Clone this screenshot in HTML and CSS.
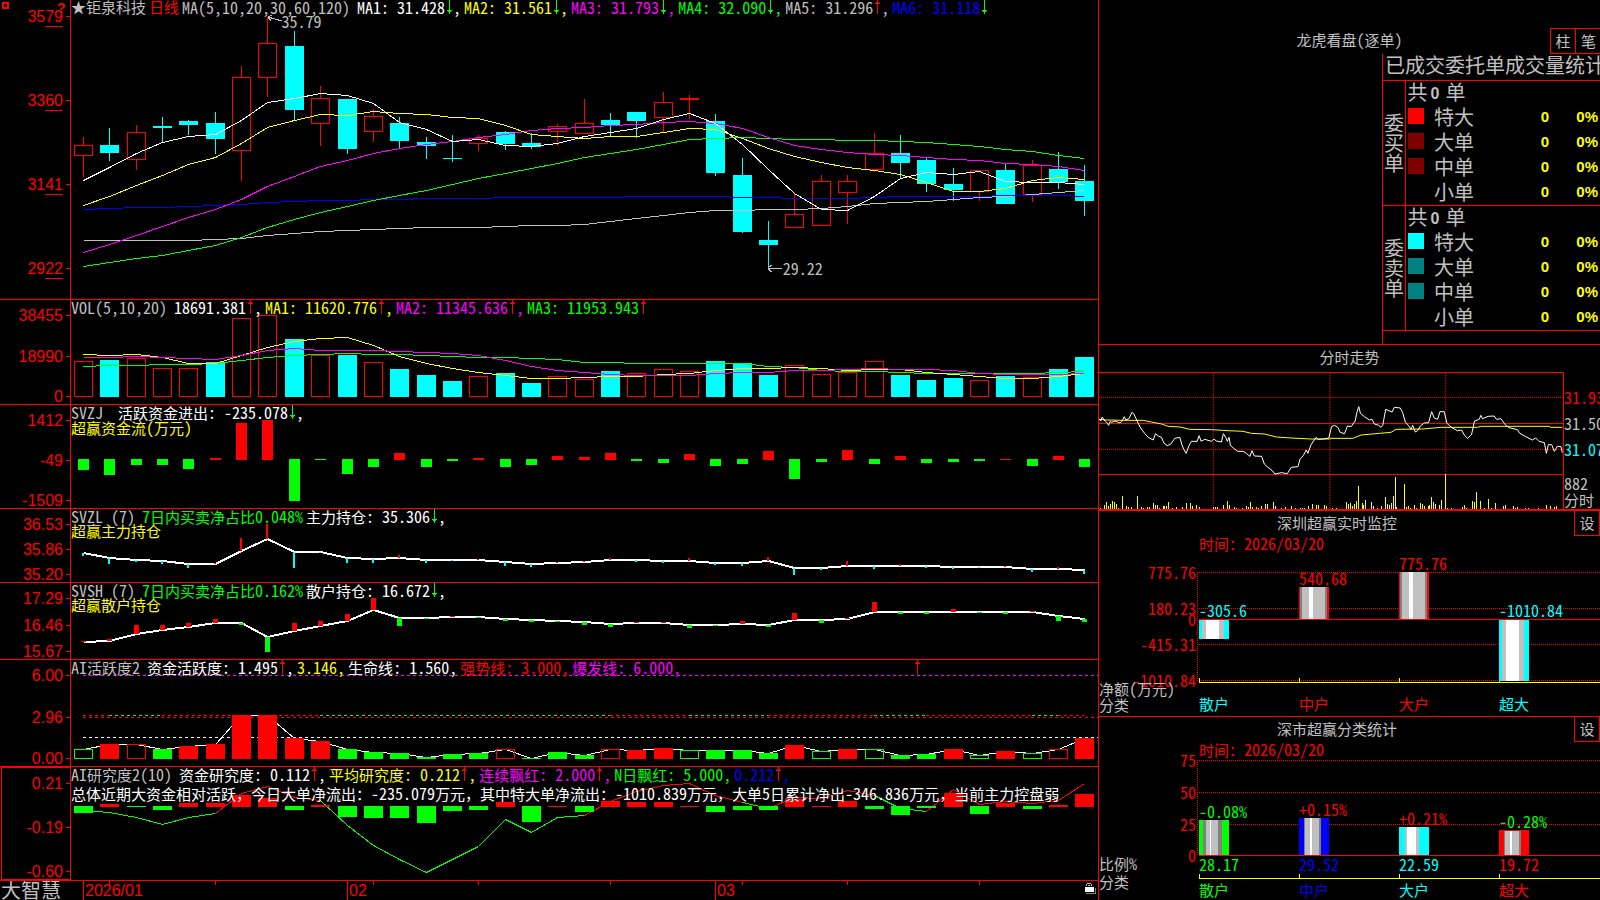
FILE: index.html
```html
<!DOCTYPE html>
<html lang="zh-cn">
<head>
	<meta charset="UTF-8" />
	<title>大智慧 - 钜泉科技</title>
	<link rel="stylesheet" href="styles.css">
</head>
<body>
	<svg class="symbols">
		<symbol id="down" viewBox="0 0 8 15"><path d="M4 0h1v10h2v1h-1v1h-1v2h-1v-2h-1v-1h-1v-1h2z" /></symbol>
		<symbol id="up" viewBox="0 0 8 15"><path d="M4 0h1v2h1v1h1v1h-2v10h-1v-10h-2v-1h1v-1h1z" /></symbol>
	</svg>
	<main class="terminal">
		<section class="charts">
			<div class="panel kline">
				<button class="pin" type="button" aria-label="菜单"></button>
				<button class="help" type="button">?</button>
				<div class="axis">
					<span>35<u>79</u></span><span>33<u>60</u></span><span>31<u>41</u></span><span>29<u>22</u></span>
				</div>
				<div class="plot">
					<svg id="kline" viewBox="0 0 1027 299" preserveAspectRatio="none"></svg>
					<p class="legend gray">
						<span>★钜泉科技</span><span class="red">日线</span><span class="n name">MA(5,10,20,30,60,120)</span>
						<span class="n white">MA1: 31.428<svg class="green"><use href="#down" /></svg>,</span>
						<span class="n yellow">MA2: 31.561<svg class="green"><use href="#down" /></svg>,</span>
						<span class="n magenta">MA3: 31.793<svg class="green"><use href="#down" /></svg>,</span>
						<span class="n green">MA4: 32.090<svg class="green"><use href="#down" /></svg>,</span>
						<span class="n gray">MA5: 31.296<svg class="red"><use href="#up" /></svg>,</span>
						<span class="n blue">MA6: 31.118<svg class="green"><use href="#down" /></svg></span>
					</p>
					<span class="mark high n">35.79</span>
					<span class="mark low n">29.22</span>
				</div>
			</div>
			<div class="panel">
				<div class="axis"><span>38455</span><span>18990</span><span>0</span></div>
				<div class="plot">
					<svg id="vol" viewBox="0 0 1027 104" preserveAspectRatio="none"></svg>
					<p class="legend">
						<span class="n gray name">VOL(5,10,20)</span>
						<span class="n white">18691.381<svg class="red"><use href="#up" /></svg>,</span>
						<span class="n yellow">MA1: 11620.776<svg class="red"><use href="#up" /></svg>,</span>
						<span class="n magenta">MA2: 11345.636<svg class="red"><use href="#up" /></svg>,</span>
						<span class="n green">MA3: 11953.943<svg class="red"><use href="#up" /></svg></span>
					</p>
				</div>
			</div>
			<div class="panel">
				<div class="axis"><span>1412</span><span>-49</span><span>-1509</span></div>
				<div class="plot">
					<svg id="svzj" viewBox="0 0 1027 103" preserveAspectRatio="none"></svg>
					<p class="legend">
						<span class="n gray name wide">SVZJ</span>
						<span class="white">活跃资金进出<span class="n">: -235.078<svg class="green"><use href="#down" /></svg>,</span></span>
					</p>
					<p class="legend yellow"><span>超赢资金流<span class="n">(</span>万元<span class="n">)</span></span></p>
				</div>
			</div>
			<div class="panel">
				<div class="axis"><span>36.53</span><span>35.86</span><span>35.20</span></div>
				<div class="plot">
					<svg id="svzl" viewBox="0 0 1027 73" preserveAspectRatio="none"></svg>
					<p class="legend">
						<span class="n gray name">SVZL (7)</span>
						<span class="green"><span class="n">7</span>日内买卖净占比<span class="n">0.048%</span></span>
						<span class="white">主力持仓<span class="n">: 35.306<svg class="green"><use href="#down" /></svg>,</span></span>
					</p>
					<p class="legend yellow"><span>超赢主力持仓</span></p>
				</div>
			</div>
			<div class="panel">
				<div class="axis"><span>17.29</span><span>16.46</span><span>15.67</span></div>
				<div class="plot">
					<svg id="svsh" viewBox="0 0 1027 76" preserveAspectRatio="none"></svg>
					<p class="legend">
						<span class="n gray name">SVSH (7)</span>
						<span class="green"><span class="n">7</span>日内买卖净占比<span class="n">0.162%</span></span>
						<span class="white">散户持仓<span class="n">: 16.672<svg class="green"><use href="#down" /></svg>,</span></span>
					</p>
					<p class="legend yellow"><span>超赢散户持仓</span></p>
				</div>
			</div>
			<div class="panel">
				<div class="axis"><span>6.00</span><span>2.96</span><span>0.00</span></div>
				<div class="plot">
					<svg id="active" viewBox="0 0 1027 106" preserveAspectRatio="none"></svg>
					<p class="legend">
						<span class="gray name"><span class="n">AI</span>活跃度<span class="n">2</span></span>
						<span class="white">资金活跃度<span class="n">: 1.495<svg class="red"><use href="#up" /></svg>,</span></span>
						<span class="n yellow">3.146,</span>
						<span class="white">生命线<span class="n">: 1.560,</span></span>
						<span class="red">强势线<span class="n">: 3.000,</span></span>
						<span class="magenta">爆发线<span class="n">: 6.000,</span></span>
					</p>
					<svg class="signal red"><use href="#up" /></svg>
				</div>
			</div>
			<div class="panel selected">
				<div class="axis"><span>0.21</span><span>-0.19</span><span>-0.60</span></div>
				<div class="plot">
					<svg id="study" viewBox="0 0 1027 113" preserveAspectRatio="none"></svg>
					<p class="legend">
						<span class="gray name"><span class="n">AI</span>研究度<span class="n">2(10)</span></span>
						<span class="white">资金研究度<span class="n">: 0.112<svg class="red"><use href="#up" /></svg>,</span></span>
						<span class="yellow">平均研究度<span class="n">: 0.212<svg class="red"><use href="#up" /></svg>,</span></span>
						<span class="magenta">连续飘红<span class="n">: 2.000<svg class="red"><use href="#up" /></svg>,</span></span>
						<span class="green"><span class="n">N</span>日飘红<span class="n">: 5.000,</span></span>
						<span class="n blue">0.212<svg class="red"><use href="#up" /></svg>,</span>
					</p>
					<p class="advice">总体近期大资金相对活跃，今日大单净流出：<span class="n">-235.079</span>万元，其中特大单净流出：<span class="n">-1010.839</span>万元，大单<span class="n">5</span>日累计净出<span class="n">-346.836</span>万元，当前主力控盘弱</p>
				</div>
			</div>
			<footer class="timeline">
				<strong>大智慧</strong>
				<div class="dates">
					<svg id="ticks" viewBox="0 0 1027 19" preserveAspectRatio="none"></svg>
					<span>2026/01</span><span>02</span><span>03</span>
					<svg class="lock" viewBox="0 0 11 12"><path d="M2 1h4v1h1v2h-1v-2h-4v2h-1v-2h1zM3 3h2v1h-2z" fill="#c0c0c0" /><path d="M10 6h1v6H1v-1h9z" fill="#808080" /><path d="M0 5h9v5H0z" fill="#fff" /></svg>
				</div>
			</footer>
		</section>

		<aside class="side">
			<section class="orders">
				<header>
					<h2>龙虎看盘<span class="n">(</span>逐单<span class="n">)</span></h2>
					<div class="tools"><button type="button">柱</button><button type="button">笔</button></div>
				</header>
				<div class="stat">
					<table>
						<caption>已成交委托单成交量统计</caption>
						<colgroup><col class="groupCol"><col class="boxCol"><col class="nameCol"><col><col class="pctCol"></colgroup>
						<tbody>
							<tr><th class="group" rowspan="5"><span>委买单</span></th><td class="total" colspan="4">共<b>0</b>单</td></tr>
							<tr><td><i class="box buy1"></i></td><th>特大</th><td class="num">0</td><td class="num">0%</td></tr>
							<tr><td><i class="box buy2"></i></td><th>大单</th><td class="num">0</td><td class="num">0%</td></tr>
							<tr><td><i class="box buy2"></i></td><th>中单</th><td class="num">0</td><td class="num">0%</td></tr>
							<tr><td></td><th>小单</th><td class="num">0</td><td class="num">0%</td></tr>
						</tbody>
						<tbody>
							<tr><th class="group" rowspan="5"><span>委卖单</span></th><td class="total" colspan="4">共<b>0</b>单</td></tr>
							<tr><td><i class="box sell1"></i></td><th>特大</th><td class="num">0</td><td class="num">0%</td></tr>
							<tr><td><i class="box sell2"></i></td><th>大单</th><td class="num">0</td><td class="num">0%</td></tr>
							<tr><td><i class="box sell2"></i></td><th>中单</th><td class="num">0</td><td class="num">0%</td></tr>
							<tr><td></td><th>小单</th><td class="num">0</td><td class="num">0%</td></tr>
						</tbody>
					</table>
				</div>
			</section>

			<section class="trend">
				<h2>分时走势</h2>
				<div class="trendBody">
					<svg id="trend" viewBox="27 99 1395 408" preserveAspectRatio="none"></svg>
					<div class="prices">
						<span class="n red">31.93</span><span class="n gray">31.50</span><span class="n cyan">31.07</span>
						<span class="n gray vol">882</span><span class="gray">分时</span>
					</div>
				</div>
			</section>

			<section class="stats monitor">
				<header>
					<h2>深圳超赢实时监控</h2>
					<div class="tools"><button type="button">设</button></div>
				</header>
				<p class="time">时间：<span class="n">2026/03/20</span></p>
				<div class="barChart">
					<div class="scale n"><span>775.76</span><span>180.23</span><span>0</span><span>-415.31</span><span>-1010.84</span></div>
					<div class="bars">
						<svg class="grid" viewBox="0 0 403 111" preserveAspectRatio="none">
							<path class="dot" d="M0 .5H403M0 36.5H403M0 72.5H403M0 108.5H403M.5 0V108" />
							<path d="M2 47.5H403" />
							<path class="base" d="M2 110.5H403M2.5 106V110M102.5 106V110M202.5 106V110M302.5 106V110" />
						</svg>
						<div class="col"><div class="above"><span class="n cyan">-305.6</span></div><i class="bar flat" style="height:19px"></i></div>
						<div class="col"><div class="above"><span class="n red">540.68</span><i class="bar rise" style="height:32px"></i></div></div>
						<div class="col"><div class="above"><span class="n red">775.76</span><i class="bar rise" style="height:47px"></i></div></div>
						<div class="col"><div class="above"><span class="n cyan">-1010.84</span></div><i class="bar flat" style="height:61px"></i></div>
					</div>
				</div>
				<div class="corner"><span>净额<span class="n">(</span>万元<span class="n">)</span></span><span>分类</span></div>
				<div class="cats"><span class="cyan">散户</span><span class="red">中户</span><span class="red">大户</span><span class="cyan">超大</span></div>
			</section>

			<section class="stats classify">
				<header>
					<h2>深市超赢分类统计</h2>
					<div class="tools"><button type="button">设</button></div>
				</header>
				<p class="time">时间：<span class="n">2026/03/20</span></p>
				<div class="barChart">
					<div class="scale n"><span>75</span><span>50</span><span>25</span><span>0</span></div>
					<div class="bars">
						<svg class="grid" viewBox="0 0 403 119" preserveAspectRatio="none">
							<path class="dot" d="M0 .5H403M0 32.5H403M0 64.5H403M.5 0V95" />
							<path d="M2 95.5H403" />
							<path class="base" d="M2 118.5H403M2.5 114V118M102.5 114V118M202.5 114V118M302.5 114V118" />
						</svg>
						<div class="col"><div class="above"><span class="n green">-0.08%</span><i class="bar c1" style="height:35px"></i></div><span class="n green">28.17</span></div>
						<div class="col"><div class="above"><span class="n red">+0.15%</span><i class="bar c2" style="height:37px"></i></div><span class="n blue">29.52</span></div>
						<div class="col"><div class="above"><span class="n red">+0.21%</span><i class="bar c3" style="height:28px"></i></div><span class="n cyan">22.59</span></div>
						<div class="col"><div class="above"><span class="n green">-0.28%</span><i class="bar c4" style="height:25px"></i></div><span class="n red">19.72</span></div>
					</div>
				</div>
				<div class="corner"><span>比例<span class="n">%</span></span><span>分类</span></div>
				<div class="cats"><span class="green">散户</span><span class="blue">中户</span><span class="cyan">大户</span><span class="red">超大</span></div>
			</section>
		</aside>
	</main>
	<script type="text/javascript" src="script.js"></script>
</body>
</html>
```
FILE: styles.css
```css
*{
	margin: 0;padding: 0;
	box-sizing: border-box;
}
body{
	background: #000;
	color: #c0c0c0;
	font: 15px/16px "Noto Sans CJK SC", sans-serif;
	overflow-x: hidden;
}
button{
	background: #000;
	color: inherit;
	font: inherit;
	border: 0;
	cursor: pointer;
}
h2{
	font-size: 15px;
	font-weight: normal;
}
.symbols{
	display: none;
}
/* 半角数字，每个字符8px */
.n{
	font-size: 16px;
	font-feature-settings: "hwid";
	white-space: pre;
}
.white{color: #fff;fill: #fff;}
.gray{color: #c0c0c0;}
.yellow{color: #ff0;}
.magenta{color: #f0f;}
.green{color: #0f0;fill: #0f0;}
.blue{color: #00f;}
.cyan{color: #0ff;}
.red{color: #f00;fill: #f00;}

.terminal{
	display: grid;
	grid-template-columns: minmax(0, 1fr) 502px;
	min-height: 100vh;
}

/* 左侧指标区 */
.charts{
	display: grid;
	grid-template-rows: 300fr 105fr 104fr 74fr 77fr 107fr 114fr 19px;
}
.panel{
	position: relative;
	display: grid;
	grid-template-columns: 71px minmax(0, 1fr);
	border-bottom: 1px solid #f00;
}
.axis{
	display: flex;
	flex-direction: column;
	justify-content: space-between;
	padding: 10px 0 1px;
	border-right: 1px solid #f00;
	color: #f00;
	font: 16px/12px "Liberation Sans", sans-serif;
	text-align: right;
}
.axis span::after{
	content: "";
	display: inline-block;
	width: 4px;height: 1px;
	margin-left: 3px;
	background: #f00;
	vertical-align: 5px;
}
.axis u{
	display: inline-block;
	height: 16px;
	margin-bottom: -4px;
	text-decoration: none;
	border-bottom: 1px solid #f00;
}
.kline .axis{
	padding: 11px 0 24px;
}
.selected .axis{
	border: 1px solid #f00;
	margin-left: 1px;
}
.pin,.help{
	position: absolute;
	top: 2px;left: 2px;
}
.pin{
	width: 7px;height: 7px;
	border: 2px solid #f00;
}
.help{
	left: 57px;
	color: #f00;
	background: none;
	font: bold 14px/12px "Liberation Sans", sans-serif;
}
.plot{
	position: relative;
}
.plot > svg,.dates > svg,.grid{
	position: absolute;
	top: 0;left: 0;
	width: 100%;height: 100%;
	shape-rendering: crispEdges;
}
.legend{
	position: relative;
	display: flex;
	gap: 3px;
	height: 15px;
	line-height: 14px;
	white-space: nowrap;
}
.legend svg{
	width: 8px;height: 15px;
	vertical-align: top;
	shape-rendering: crispEdges;
}
.name{
	margin-right: 4px;
}
.wide{
	margin-right: 12px;
}
.advice{
	position: relative;
	color: #fff;
	line-height: 22px;
	white-space: nowrap;
}
.mark{
	position: absolute;
}
.high{
	top: 13px;left: 20.5%;
}
.low{
	bottom: 23px;left: 69.3%;
}
.plot > .signal{
	left: 82%;
	width: 8px;height: 15px;
}
.timeline{
	display: grid;
	grid-template-columns: 71px minmax(0, 1fr);
}
.timeline strong{
	padding-left: 1px;
	font-size: 20px;
	font-weight: normal;
	line-height: 17px;
}
.dates{
	position: relative;
	display: grid;
	grid-template-columns: 264fr 368fr 383fr;
	padding-left: 12px;
	color: #f00;
	font: 16px/19px "Liberation Sans", sans-serif;
}
.dates span{
	padding-left: 1px;
	border-left: 1px solid #f00;
}
.dates > .lock{
	left: auto;right: 2px;top: 1px;
	width: 11px;height: 12px;
}

/* 右侧 */
.side{
	display: flex;
	flex-direction: column;
	border-left: 1px solid #f00;
}
.side h2{
	text-align: center;
}
.side header{
	position: relative;
	line-height: 23px;
	height: 25px;
}
.tools{
	position: absolute;
	top: 0;right: 0;
	display: flex;
}
.tools button{
	width: 26px;height: 25px;
	padding-bottom: 2px;
	border: 1px solid #f00;
	border-top: 0;
	line-height: 21px;
}
.orders{
	padding-top: 28px;
	border-bottom: 1px solid #f00;
}
.orders .tools{
	right: -2px;
	border-top: 1px solid #f00;
}
.orders .tools button + button{
	border-left: 0;
}
.stat{
	margin: 1px 0 0 283px;
	padding-bottom: 13px;
	border-left: 1px solid #f00;
	overflow: hidden;
}
.stat table{
	width: 100%;
	border-collapse: collapse;
	table-layout: fixed;
	font-size: 20px;
	line-height: 21px;
}
.stat caption{
	padding-left: 2px;
	height: 26px;
	line-height: 22px;
	text-align: left;
	white-space: nowrap;
}
.stat tbody{
	border-top: 1px solid #f00;
	border-bottom: 1px solid #f00;
}
.stat tr{
	height: 25px;
}
.stat td,.stat th{
	vertical-align: top;
}
.groupCol{width: 22px;}
.boxCol{width: 27px;}
.nameCol{width: 44px;}
.pctCol{width: 56px;}
.stat th{
	font-weight: normal;
}
.stat .group{
	border-right: 1px solid #f00;
	line-height: 20px;
	vertical-align: middle;
}
.group span{
	display: block;
	width: 20px;
	margin: -1px 0 0 1px;
}
.total{
	padding-left: 2px;
}
.total b{
	padding: 0 6px 0 3px;
	font: bold 16px "Liberation Sans", sans-serif;
	vertical-align: 1px;
}
.box{
	display: block;
	width: 16px;height: 16px;
	margin: 2px 0 0 2px;
}
.buy1{background: #f00;}
.buy2{background: #800000;}
.sell1{background: #0ff;}
.sell2{background: #008080;}
.num{
	color: #ff0;
	font: bold 15px/21px "Liberation Sans", sans-serif;
	text-align: right;
}
.num:last-child{
	padding-right: 7px;
}

.trend{
	border-bottom: 2px solid #f00;
}
.trend h2{
	height: 27px;
	line-height: 23px;
}
.trendBody{
	display: grid;
	grid-template-columns: minmax(0, 1fr) 36px;
}
#trend{
	width: 100%;height: 137px;
	border-top: 1px solid #f00;
	border-right: 1px solid #f00;
	shape-rendering: crispEdges;
}
.prices{
	display: flex;
	flex-direction: column;
	gap: 10px;
	padding: 17px 0 0;
	overflow: hidden;
	white-space: nowrap;
}
.prices .vol{
	margin: 8px 0 -9px;
}

.stats{
	display: grid;
	grid-template-columns: 98px minmax(0, 1fr);
}
.stats header,.barChart{
	grid-column: 1 / 3;
}
.stats h2{
	margin-right: 25px;
}
.monitor{
	border-bottom: 1px solid #f00;
}
.time{
	grid-column: 2;
	height: 36px;
	padding-left: 2px;
	color: #f00;
	line-height: 14px;
}
.classify .time{
	height: 18px;
}
.barChart{
	display: grid;
	grid-template-columns: 98px minmax(0, 1fr);
}
.scale{
	display: grid;
	grid-template-rows: 36px 11px 25px 36px;
	height: 111px;
	margin-top: -8px;
	margin-bottom: 8px;
	color: #f00;
	text-align: right;
	padding-right: 1px;
}
.classify .scale{
	grid-template-rows: 32px 32px 31px;
	height: 119px;
}
.scale span{
	height: 16px;
}
.bars{
	position: relative;
	display: grid;
	grid-template-columns: repeat(4, 1fr);
	padding: 0 1px 0 2px;
}
.col{
	position: relative;
}
.above{
	display: flex;
	flex-direction: column;
	justify-content: flex-end;
	height: 47px;
	margin-bottom: 1px;
	line-height: 18px;
}
.classify .above{
	height: 95px;
}
.bar{
	display: block;
	flex: none;
	width: 30px;
}
.flat{
	background: linear-gradient(90deg, #0ff 3px, #c0c0c0 3px 7px, #fff 7px 20px, #c0c0c0 20px 25px, #0ff 25px);
}
.rise{
	background: linear-gradient(90deg, #f00 1px, #808080 1px 3px, #c0c0c0 3px 10px, #fff 10px 14px, #c0c0c0 14px 26px, #808080 26px 28px, #f00 28px);
}
.c1{
	background: linear-gradient(90deg, #0f0 4px, #808080 4px 7px, #c0c0c0 7px 11px, #fff 11px 12px, #c0c0c0 12px 19px, #808080 19px 23px, #0f0 23px);
}
.c2{
	background: linear-gradient(90deg, #00f 5px, #808080 5px 6px, #c0c0c0 6px 11px, #fff 11px 13px, #c0c0c0 13px 20px, #808080 20px 22px, #00f 22px);
}
.c3{
	background: linear-gradient(90deg, #0ff 6px, #c0c0c0 6px 8px, #fff 8px 17px, #c0c0c0 17px 20px, #0ff 20px);
}
.c4{
	background: linear-gradient(90deg, #f00 5px, #808080 5px 6px, #c0c0c0 6px 11px, #fff 11px 13px, #c0c0c0 13px 20px, #808080 20px 22px, #f00 22px);
	border-top: 1px solid #f00;
}
.grid path{
	fill: none;
	stroke: #f00;
}
.grid .dot{
	stroke-dasharray: 1 1;
}
.grid .base{
	stroke: #ff0;
}
.corner{
	position: relative;
	display: flex;
	flex-direction: column;
	margin-top: -3px;
	height: 36px;
	white-space: nowrap;
}
.cats{
	display: grid;
	grid-template-columns: repeat(4, 1fr);
	padding: 13px 1px 0 2px;
}
.classify .corner{
	gap: 2px;
	margin-top: -24px;
	height: 43px;
}
.classify .cats{
	padding-top: 3px;
}
```
FILE: script.js
```js
var NS = 'http://www.w3.org/2000/svg',
	RED = '#f00', GREEN = '#0f0', CYAN = '#0ff', WHITE = '#fff', YELLOW = '#ff0', MAGENTA = '#f0f', GRAY = '#c0c0c0', BLUE = '#00f';

//第i根K线的中心位置
function cx(i){
	return 12 + Math.round(26.35 * i);
}

function add(svg, tag, attrs){
	var el = document.createElementNS(NS, tag);
	for(var k in attrs){
		el.setAttribute(k, attrs[k]);
	}
	svg.appendChild(el);
}

function fill(svg, x, y, w, h, color){
	add(svg, 'rect', {x: x, y: y, width: w, height: Math.max(h, 1), fill: color});
}

function hollow(svg, x, y, w, h, color){
	add(svg, 'rect', {x: x + .5, y: y + .5, width: w - 1, height: Math.max(h - 1, 1), fill: 'none', stroke: color});
}

function line(svg, ys, color, width, from){
	var off = width == 2 ? 0 : .5;
	var pts = ys.map(function(y, i){
		return (cx(i + (from || 0)) + .5) + ',' + (y + off);
	});
	add(svg, 'polyline', {points: pts.join(' '), fill: 'none', stroke: color, 'stroke-width': width || 1});
}

function dash(svg, x1, x2, y, color){
	add(svg, 'path', {d: 'M' + x1 + ' ' + (y + .5) + 'H' + x2, stroke: color, 'stroke-dasharray': '3 3'});
}

//K线：颜色, 最高, 实体上, 实体下, 最低
var candles = [
	['r',137,145,156,177],['c',128,145,153,161],['r',125,132,160,170],['c',117,126,128,142],['c',120,121,125,135],
	['c',112,123,139,154],['r',66,77,151,181],['r',17,43,78,97],['c',31,46,110,121],['r',86,98,124,146],
	['c',99,99,149,154],['r',109,116,132,142],['c',117,123,141,148],['c',137,142,146,159],['c',135,158,159,162],
	['r',135,138,144,151],['c',131,132,144,150],['c',133,143,147,149],['r',124,126,132,146],['r',99,123,134,134],
	['c',113,120,125,136],['c',112,112,121,138],['r',92,102,118,132],['r',95,98,100,119],['c',114,121,173,176],
	['c',158,175,232,233],['c',221,240,245,268],['r',193,214,228,228],['r',175,181,226,226],['r',175,181,193,224],
	['r',133,153,170,172],['c',135,153,163,178],['c',158,160,184,192],['c',168,184,190,201],['r',170,170,192,201],
	['c',163,170,204,204],['r',160,165,195,202],['c',152,169,182,189],['c',165,181,201,216]
];
var kline = document.getElementById('kline');
candles.forEach(function(d, i){
	var x = cx(i);
	if(d[0] == 'c'){
		fill(kline, x, d[1], 1, d[4] - d[1], CYAN);
		fill(kline, x - 9, d[2], 19, d[3] - d[2], CYAN);
	}else{
		fill(kline, x, d[1], 1, d[2] - d[1], RED);
		if(d[4] > d[3]){
			fill(kline, x, d[3], 1, d[4] - d[3], RED);
		}
		hollow(kline, x - 9, d[2], 19, d[3] - d[2], RED);
	}
});
line(kline, [240,240,240,240,240,239,238,235,233,231,230,229,228,227,227,227,226,225,225,224,221,218,215,212,210,210,209,209,208,206,203,202,201,199,197,196,194,192,190], GRAY);
line(kline, [209,208,207,207,206,205,204,202,201,200,200,199,199,198,198,198,197,197,197,197,197,196,196,196,196,197,197,198,198,198,197,196,196,196,196,195,195,195,196], BLUE);
line(kline, [266,262,258,255,250,245,237,227,219,212,206,200,195,190,184,178,173,168,163,157,153,149,144,139,138,137,138,139,139,140,140,141,142,144,146,149,151,155,158], GREEN);
line(kline, [252,244,235,226,217,209,199,186,176,166,160,153,148,144,141,137,134,130,128,127,125,124,122,121,123,128,137,145,149,152,154,155,157,159,160,163,164,166,170], MAGENTA);
line(kline, [205,196,185,175,164,157,143,127,120,114,115,111,113,114,117,118,125,134,136,138,136,136,132,128,129,138,148,156,162,167,170,174,182,191,191,188,180,177,179], YELLOW);
line(kline, [180,167,153,142,136,134,120,102,98,93,95,103,122,129,141,139,145,146,143,136,132,128,119,113,123,144,169,193,209,210,196,178,172,174,171,181,182,182,184], WHITE);
add(kline, 'path', {d: 'M197 17l14 4M197 17l4 -2M197 17l3 4M697 268.5h14M697 268l4 -3M697 269l4 3', stroke: GRAY, fill: 'none'});

//成交量
var vol = document.getElementById('vol'),
	volTop = [61,60,58,68,68,62,18,15,39,55,55,62,69,75,81,76,73,83,76,79,71,73,69,71,61,63,75,65,74,72,61,75,80,78,80,76,77,69,57],
	volType = 'rcrrrcrrcrcrcccrccrrcrrrcccrrrrcccrcrcc';
volTop.forEach(function(y, i){
	(volType.charAt(i) == 'r' ? hollow : fill)(vol, cx(i) - 9, y, 19, 97 - y, volType.charAt(i) == 'r' ? RED : CYAN);
});
line(vol, [66,65,65,64,64,63,60,57,55,54,53,54,54,55,56,57,57,58,59,62,62,63,63,63,63,63,66,67,70,71,71,72,73,73,73,73,73,72,71], GREEN);
line(vol, [54,55,54,57,63,63,55,47,41,38,37,45,56,63,68,72,75,78,78,77,76,76,74,73,70,68,68,67,68,70,69,69,72,74,76,78,78,76,73], YELLOW);
line(vol, [57,57,56,57,58,59,55,50,48,50,50,50,51,52,53,55,60,66,70,72,74,75,75,75,73,72,72,70,70,69,68,69,69,70,73,74,74,74,73], MAGENTA);

//红绿柱，正数向上，负数向下
function bars(svg, zero, width, data){
	data.forEach(function(v, i){
		var x = cx(i) - (width - 1) / 2;
		v > 0 ? fill(svg, x, zero + 1 - v, width, v, RED) : fill(svg, x, zero, width, -v, GREEN);
	});
}
bars(document.getElementById('svzj'), 54, 11, [-11,-16,-6,-6,-10,2,37,40,-42,-1,-15,-8,7,-8,-2,2,-8,-6,4,3,7,-2,-4,6,-7,-5,9,-20,-3,10,-5,4,-4,-3,-2,1,-7,4,-8]);

//持仓线和上下短柱
function hold(id, ys, ends, width, downColor){
	var svg = document.getElementById(id);
	line(svg, ys, WHITE, 2);
	ends.forEach(function(e, i){
		fill(svg, cx(i) - Math.floor(width / 2), Math.min(e, ys[i]), width, Math.abs(e - ys[i]), e < ys[i] ? RED : downColor);
	});
}
hold('svzl',
	[44,49,51,52,55,55,42,30,43,43,49,50,49,51,51,51,53,55,54,53,51,51,52,52,54,54,52,59,59,57,57,57,57,58,58,58,60,60,61],
	[47,55,53,55,59,54,29,15,59,44,54,54,46,54,52,50,57,58,53,52,49,53,54,49,56,57,48,66,61,52,60,55,59,60,59,57,63,58,65], 2, CYAN);
hold('svsh',
	[59,58,51,47,44,40,40,54,48,43,38,27,35,35,34,34,36,37,38,39,41,40,40,42,42,41,42,37,37,36,29,29,29,29,29,29,29,33,36],
	[58,56,42,42,40,36,42,69,40,38,31,15,43,36,33,35,38,39,39,42,44,39,39,45,43,38,44,30,40,35,19,31,31,26,30,31,28,38,39], 5, GREEN);

//活跃度：大写实心，小写空心
var active = document.getElementById('active'),
	actTop = [89,84,84,89,86,84,55,55,78,81,89,92,93,97,94,93,89,98,92,95,89,90,88,90,90,90,93,85,91,89,89,95,94,89,95,91,93,89,78],
	actType = 'gRrGRRRRRRGGGGGGrGGGrRRgGGGRgRgGGRgRgrR';
dash(active, 12, 1027, 15, MAGENTA);
dash(active, 12, 1027, 57, RED);
dash(active, 12, 1027, 77, WHITE);
[[0,1,RED],[1,3,GREEN],[3,6,RED],[6,7,WHITE],[7,9,RED],[9,20,GREEN],[20,23,RED],[23,26,GREEN],[26,30,RED],[30,32,GREEN],[32,36,RED],[36,37,GREEN],[37,38,RED]].forEach(function(s){
	dash(active, cx(s[0]), cx(s[1]), 55, s[2]);
});
line(active, actTop, WHITE);
actTop.forEach(function(y, i){
	var t = actType.charAt(i);
	(t == t.toLowerCase() ? hollow : fill)(active, cx(i) - 9, y, 19, 99 - y, t.toLowerCase() == 'r' ? RED : GREEN);
});

//研究度
var study = document.getElementById('study'),
	avg = [43,45,50,57,50,46,26,19,30,33,58,78,92,105,92,79,52,65,50,48,34,24,18,16,28,35,41,30,31,23,28,41,44,22,37,34,36,33,16];
[[0,5,GREEN],[5,9,RED],[9,19,GREEN],[19,25,RED],[25,26,GREEN],[26,30,RED],[30,32,GREEN],[32,38,RED]].forEach(function(s){
	line(study, avg.slice(s[0], s[1] + 1), s[2], 1, s[0]);
});
bars(study, 39, 19, [-7,3,-1,-4,4,4,12,9,-4,2,-11,-12,-12,-17,-5,-4,5,-16,1,-6,6,5,5,1,-6,-4,-4,8,1,6,-3,-9,-2,14,-8,4,-3,2,13]);

//时间轴短刻度
[1,5,11,15,20,25,29,34].forEach(function(i){
	fill(document.getElementById('ticks'), cx(i), 0, 1, 4, RED);
});

//分时走势
var trend = document.getElementById('trend'),
	price = '27,236 32,243 37,231 42,240 50,247 56,256 60,245 66,247 75,243 90,249 97,243 103,230 108,240 117,236 126,217 132,222 138,235 146,252 152,264 165,281 175,292 190,300 197,281 205,288 215,292 222,309 232,317 243,312 255,295 270,292 276,314 282,328 289,340 298,316 305,304 322,304 328,287 334,304 345,298 365,304 372,297 380,303 395,306 401,281 408,292 413,304 418,292 422,316 432,325 444,334 460,334 470,340 481,349 487,332 494,348 516,349 524,372 535,382 548,392 556,402 575,398 593,401 605,382 625,380 632,356 641,347 650,330 655,340 665,313 680,292 685,298 700,297 718,294 726,260 735,256 745,262 752,277 765,281 774,258 785,260 797,243 803,215 808,200 813,220 825,230 840,240 848,238 855,252 868,256 875,262 880,256 889,208 908,216 915,202 933,204 940,218 948,246 958,257 965,268 970,256 978,276 985,272 993,258 1005,249 1018,248 1027,215 1035,234 1045,238 1052,215 1065,215 1073,250 1088,263 1105,272 1117,270 1126,286 1135,295 1147,284 1156,243 1170,238 1175,226 1180,236 1197,229 1215,228 1222,238 1235,236 1250,256 1260,263 1285,269 1292,280 1310,290 1330,300 1340,294 1350,304 1366,308 1372,340 1378,314 1388,314 1396,334 1405,319 1416,320 1420,338',
	average = '27,238 50,240 100,241 160,241 185,246 215,252 235,259 270,261 300,268 365,269 415,272 460,274 485,280 525,282 560,291 605,294 665,297 720,297 725,295 790,295 815,285 870,280 905,277 920,268 1000,267 1055,262 1165,262 1175,259 1380,259 1385,262 1420,262',
	deals = [31,504,43,495,49,486,55,498,61,492,67,483,73,486,79,492,85,504,97,468,109,498,115,501,124,501,142,468,154,501,160,504,172,501,178,501,190,489,196,495,202,495,208,504,220,498,223,498,229,498,235,486,247,504,259,501,277,501,289,489,301,489,307,498,319,495,328,501,370,501,376,501,382,501,400,495,412,483,418,495,433,501,439,504,457,504,469,498,475,501,481,486,487,501,499,501,505,504,514,498,526,492,532,492,550,486,556,498,574,504,586,501,604,498,616,504,631,504,637,504,643,504,655,498,667,492,679,495,685,495,703,495,709,498,724,504,730,504,742,504,772,486,778,492,784,489,790,498,796,492,802,483,808,438,820,489,823,495,829,480,847,486,853,498,865,504,877,498,889,471,895,492,901,495,907,489,913,468,919,411,922,501,946,432,952,501,958,498,964,504,976,495,982,504,994,489,1000,492,1006,498,1018,498,1021,495,1027,471,1033,486,1039,492,1051,495,1057,480,1069,402,1075,504,1087,504,1120,501,1126,495,1132,504,1150,483,1156,486,1162,456,1174,483,1186,504,1198,477,1207,504,1219,489,1243,498,1249,495,1273,498,1279,504,1285,501,1309,504,1318,504,1348,504,1372,495,1384,498,1396,501,1402,498];
add(trend, 'path', {d: 'M27 172.5H1422M27 328.5H1422M370.5 99V507M721.5 99V507M1069.5 99V507', stroke: RED, 'stroke-width': 3, 'stroke-dasharray': '3 3'});
add(trend, 'path', {d: 'M27 250.5H1422M27 403.5H1422', stroke: RED, 'stroke-width': 3});
for(var j = 0; j < deals.length; j += 2){
	fill(trend, deals[j] - 1, deals[j + 1], 3, 507 - deals[j + 1], YELLOW);
}
add(trend, 'polyline', {points: average, fill: 'none', stroke: YELLOW, 'stroke-width': 3});
add(trend, 'polyline', {points: price, fill: 'none', stroke: WHITE, 'stroke-width': 3});
```
